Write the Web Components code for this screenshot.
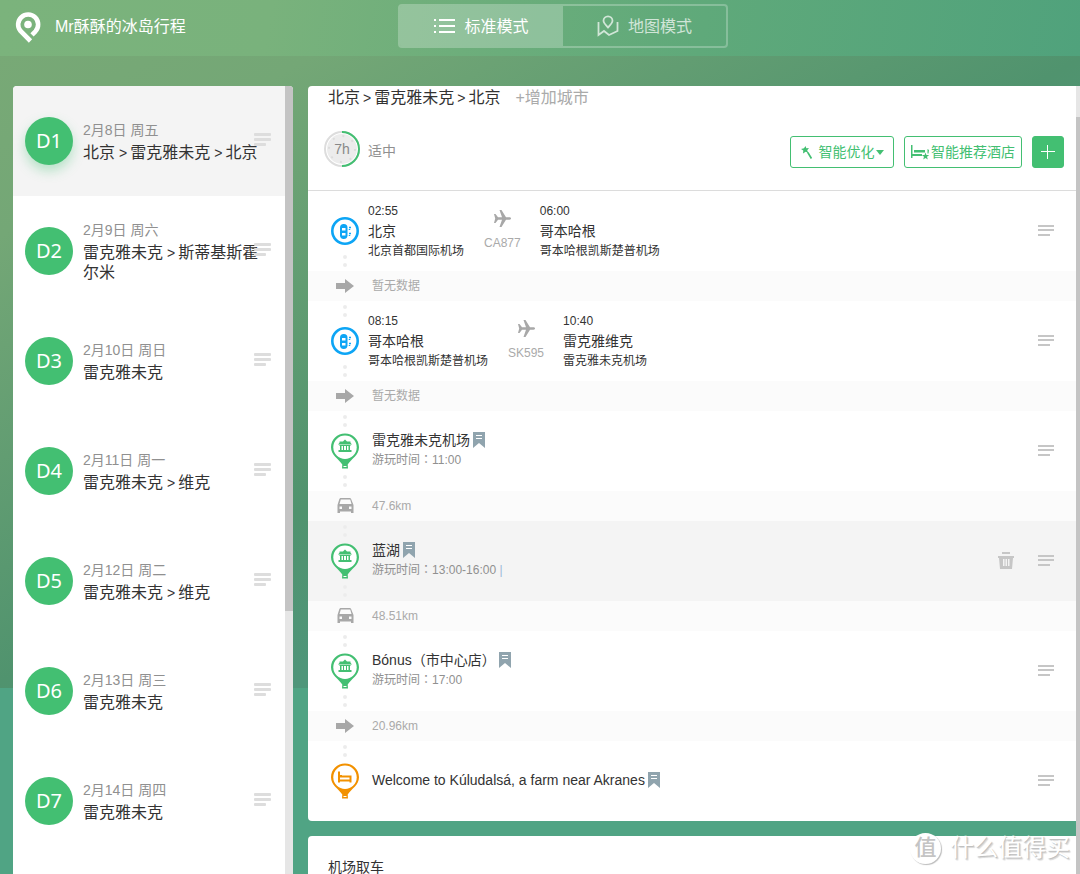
<!DOCTYPE html>
<html lang="zh-CN">
<head>
<meta charset="utf-8">
<meta name="viewport" content="width=device-width, initial-scale=1">
<title>Mr酥酥的冰岛行程</title>
<style>
html, body { height: 100%; }
body {
  margin: 0; overflow: hidden; color: #333;
  font: 14px/20px "Liberation Sans", "Noto Sans CJK SC", sans-serif;
  --green: #43bf72; --mute: #909090; --faint: #aaa;
}
</style>
</head>
<body>
<trip-app></trip-app>
<script>
const reset = `
  *, *::before, *::after { box-sizing: border-box; }
  svg { display: block; flex: none; }
  button { font: inherit; color: inherit; margin: 0; padding: 0; border: 0; background: none; cursor: pointer; }
  a { color: inherit; text-decoration: none; }
`;
function define(name, view) {
  customElements.define(name, class extends HTMLElement {
    connectedCallback() {
      if (this.shadowRoot) return;
      this.attachShadow({ mode: 'open' });
      const t = document.createElement('template');
      t.innerHTML = '<style>' + reset + '</style>' + view(this.dataset, this);
      this.shadowRoot.append(t.content.cloneNode(true));
    }
  });
}
const route = cities => cities.split('>').join('<i>&gt;</i>');

/* three-line drag handle */
define('drag-grip', () => `
<style>
  :host { display: block; flex: none; width: 16px; padding-bottom: 2px; color: #c6c6c6; }
  button { display: block; width: 100%; }
  :host([thick]) { width: 17px; color: #ddd; }
  .b { display: none; }
  :host([thick]) .a { display: none; }
  :host([thick]) .b { display: block; }
</style>
<button aria-label="拖动排序">
  <svg class="a" width="16" height="11" fill="currentColor"><path d="M0 0h16v2H0zM0 4h16v2H0zM0 9h12v2H0z"/></svg>
  <svg class="b" width="17" height="13" fill="currentColor"><rect width="17" height="3" rx="1"/><rect y="5" width="17" height="3" rx="1"/><rect y="10" width="12" height="3" rx="1"/></svg>
</button>`);

define('scroll-rail', () => `
<style>
  :host { display: flow-root; flex: none; width: 8px; background: #e6e6e6; }
  div { height: var(--size, 50%); margin-top: var(--from, 0px); background: #c4c4c4; }
</style><div></div>`);

define('top-bar', () => `
<style>
  :host { display: flex; height: 56px; background: linear-gradient(100deg, #7bb37c 0%, #79b27c 25%, #5fa97a 65%, #50a27c 100%); color: #fff; font-size: 16px; }
  .brand { flex: 0 1 398px; display: flex; align-items: center; gap: 14px; padding-left: 15px; padding-bottom: 2px; }
  nav { display: flex; flex: 0 0 330px; height: 44px; margin-top: 4px; border: 2px solid rgba(255,255,255,.25); border-radius: 4px; background-clip: padding-box; overflow: hidden; }
  nav button { flex: 1; display: flex; align-items: center; justify-content: center; gap: 9px; padding-top: 2px; opacity: .7; }
  nav .on { background: rgba(255,255,255,.25); opacity: 1; }
  nav svg { margin-bottom: 2px; }
</style>
<a class="brand" href="#">
  <svg width="26" height="32" viewBox="0 0 26 32" fill="none" stroke="#fff" stroke-width="4.600"><path d="M15.500 30L5.500 20A10 10 0 1 1 20.500 20.300L17 23.800"/><circle cx="13" cy="13.500" r="3.800" fill="#fff" stroke="none"/></svg>
  <span>Mr酥酥的冰岛行程</span>
</a>
<nav>
  <button class="on"><svg width="21" height="14" fill="#fff"><path d="M0 0h2v2H0zM5 0h16v2H5zM0 6h2v2H0zM5 6h16v2H5zM0 12h2v2H0zM5 12h16v2H5z"/></svg>标准模式</button>
  <button><svg width="22" height="22" viewBox="0 0 22 22" fill="none" stroke="#fff" stroke-width="1.800"><path d="M11 12.500C8 9.500 6.500 8 6.500 5.800a4.500 4.500 0 0 1 9 0C15.500 8 14 9.500 11 12.500z"/><path d="M1.500 7v13l5.500-4 5 4 8.500-4V7"/></svg>地图模式</button>
</nav>`);

define('day-item', (d, el) => `
<style>
  :host { display: flex; align-items: center; gap: 10px; position: relative; height: 110px; padding-left: 12px; }
  :host([active]) { background: #f4f4f4; }
  .no { flex: none; width: 48px; height: 48px; border-radius: 50%; background: var(--green); color: #fff; text-align: center; font: 20px/48px "Noto Sans", sans-serif; }
  :host([active]) .no { box-shadow: 0 6px 12px rgba(67,191,114,.35); }
  .text { width: 180px; }
  time { display: block; color: var(--mute); margin-bottom: 3px; }
  .route { font-size: 16px; }
  i { font-style: normal; font-size: 14px; margin: 0 3px 0 4px; }
  drag-grip { position: absolute; right: 14px; top: 47px; }
</style>
<button class="no">${d.no}</button>
<div class="text"><time>${d.date}</time><div class="route">${route(d.route)}</div></div>
<drag-grip thick></drag-grip>`);

define('day-list', () => `
<style>
  :host { display: flex; width: 280px; flex: none; background: #fff; border-radius: 4px 4px 0 0; overflow: hidden; }
  .list { flex: 1; overflow: hidden; }
  scroll-rail { --size: 66.600%; }
</style>
<div class="list"><slot></slot></div><scroll-rail></scroll-rail>`);

/* column of dots running through the stop's icon */
define('stop-rail', d => {
  const pin = (color, inner) => `<svg width="28" height="36" viewBox="0 0 28 36"><path d="M14 .500C6.200.500 0 6.500 0 14.300c0 8 7.500 11.500 11.300 17.200L11 35.500h6l-.3-4C20.500 25.800 28 22.300 28 14.300 28 6.500 21.800.500 14 .500z" fill="${color}"/><path d="M12.500 33.500h3" stroke="#fff"/><circle cx="14" cy="14.300" r="11.700" fill="#fff"/>${inner}</svg>`;
  const icons = {
    flight: `<svg width="28" height="28" viewBox="0 0 28 28"><circle cx="14" cy="14" r="12.700" fill="#fff" stroke="#0da5f5" stroke-width="2.600"/><rect x="9" y="7" width="7.500" height="15" rx="3.700" fill="#0da5f5"/><path d="M11 11h3.500v2.500H11zM11 16h3.500v2.500H11z" fill="#fff"/><path d="M18 10.500h2M18.500 12v1M18 16.500h2M18.500 18v1" stroke="#0da5f5" stroke-width="1.500"/></svg>`,
    sight: pin('#43bf72', '<path d="M14 6.500l2 2h3.500v1.300l1.500 1.700H7l1.500-1.700V8.500H12zM8.500 12h11v1h-11zM9 13h1.500v4H9zM12 13h1v4h-1zM15 13h1v4h-1zM17.500 13H19v4h-1.500zM7.500 17h13v2h-13z" fill="#43bf72"/>'),
    hotel: pin('#f29100', '<path d="M8 8.500v11M8.500 17.500h11M19.500 19.500v-6H10v-1.500" fill="none" stroke="#f29100" stroke-width="2"/>')
  };
  return `
<style>
  :host { display: flex; flex-direction: column; justify-content: space-between; align-items: center; flex: none; width: 28px; height: 80px; padding: 4px 0; }
  .dots { display: grid; gap: 4px; }
  .dots::before, .dots::after { content: ""; width: 4px; height: 4px; border-radius: 50%; background: #ececec; }
  :host([data-end="first"]) .top, :host([data-end="last"]) .bottom { visibility: hidden; }
</style>
<div class="dots top"></div>${icons[d.kind]}<div class="dots bottom"></div>`;
});

define('flight-row', d => `
<style>
  :host { display: flex; align-items: center; height: 80px; padding: 0 22px 0 23px; }
  .stop { font-size: 12px; color: #333; }
  .stop strong { display: block; font-size: 14px; font-weight: 400; }
  .stop time { display: block; }
  .from { margin-left: 9px; }
  .plane { display: flex; flex-direction: column; align-items: center; gap: 6px; margin: 0 19px 0 20px; font-size: 12px; color: var(--faint); }
  drag-grip { margin-left: auto; }
</style>
<stop-rail data-kind="flight" data-end="${d.end || ''}"></stop-rail>
<div class="stop from"><time>${d.t1}</time><strong>${d.c1}</strong>${d.a1}</div>
<div class="plane"><svg width="17" height="17" viewBox="0 0 17 17" fill="#a8a8a8"><path d="M0 4h1.500L4 7.300h4L5.500 0h2l4.500 7.300h3.500c2 0 2 2.400 0 2.400H12L7.500 17h-2L8 9.700H4L1.500 13H0l1.200-4.500z"/></svg>${d.no}</div>
<div class="stop"><time>${d.t2}</time><strong>${d.c2}</strong>${d.a2}</div>
<drag-grip></drag-grip>`);

define('spot-row', (d, el) => `
<style>
  :host { display: flex; align-items: center; height: 80px; padding: 0 22px 0 23px; }
  :host([active]) { background: #f4f4f4; }
  .text { margin-left: 13px; padding-bottom: 3px; }
  .name { display: flex; align-items: center; gap: 3px; }
  .time { font-size: 12px; color: var(--mute); }
  .wide { font-family: "Noto Sans CJK TC", sans-serif; line-height: 1; }
  .bar { color: #9db8d8; }
  .tools { display: flex; align-items: center; gap: 24px; margin-left: auto; }
  .tools button { padding-bottom: 2px; }
</style>
<stop-rail data-kind="${d.kind || 'sight'}" data-end="${d.end || ''}"></stop-rail>
<div class="text">
  <div class="name"><a href="#">${d.name.replace(/[（）]/g, '<span class="wide" lang="zh-Hant">$&</span>')}</a><svg width="12" height="16" viewBox="0 0 12 16"><path d="M0 0h12v16l-6-5-6 5z" fill="#90a4ae"/><path d="M3 3.500h6M3 6.500h6" stroke="#fff"/></svg></div>
  ${d.time ? `<div class="time">游玩时间<span class="wide" lang="zh-Hant">：</span>${d.time}${el.hasAttribute('active') ? ' <span class="bar">|</span>' : ''}</div>` : ''}
</div>
<div class="tools">
  ${el.hasAttribute('active') ? '<button aria-label="删除"><svg width="16" height="17" fill="#c6c6c6"><path fill-rule="evenodd" d="M4 0h8v2H4zM0 4h16v2h-1l-1 11H2L1 6H0zM5 7v7h1.500V7zM7.500 7v7H9V7zM10 7v7h1.500V7z"/></svg></button>' : ''}
  <drag-grip></drag-grip>
</div>`);

define('transit-row', d => `
<style>
  :host { display: flex; align-items: center; gap: 13px; height: 30px; padding-left: 23px; background: #fbfbfb; font-size: 12px; color: var(--faint); }
  .icon { display: flex; justify-content: center; width: 28px; }
</style>
<span class="icon">${d.by === 'car'
  ? '<svg width="18" height="16" viewBox="0 0 18 16"><path fill="#a8a8a8" fill-rule="evenodd" d="M5 0h8.500c1 0 1.500.5 1.800 1.500L17.500 7v8H15v-1.500H4V15H1.500V7l1.700-5.500C3.500.5 4 0 5 0zM4.800 1.500L3.500 6h12l-1.300-4.500zM3.500 8.500V11H6V8.500zM13 8.500V11h2.500V8.500z"/></svg>'
  : '<svg width="18" height="14" viewBox="0 0 18 14"><path fill="#a8a8a8" d="M0 4h9V0l9 7-9 7v-4H0z"/></svg>'}</span>
<span>${d.text}</span>`);

define('plan-head', () => `
<style>
  :host { display: block; border-bottom: 1px solid #dcdcdc; }
  .route { display: flex; gap: 15px; padding: 2px 20px 0; font-size: 16px; color: #333; }
  .route button { color: var(--faint); }
  i { font-style: normal; font-size: 14px; margin: 0 3px; }
  .bar { display: flex; align-items: center; height: 82px; padding: 0 12px 0 16px; }
  .ring { display: grid; place-items: center; position: relative; }
  .ring span { position: absolute; font-size: 14px; color: #888; }
  .pace { margin-left: 8px; padding-top: 4px; color: var(--mute); }
  .acts { display: flex; gap: 10px; margin-left: auto; padding-top: 6px; }
  .acts button { display: flex; align-items: center; justify-content: center; height: 32px; border: 1px solid var(--green); border-radius: 3px; color: var(--green); white-space: nowrap; }
  .opt { width: 104px; gap: 1px; }
  .opt svg:first-child { margin-right: 5px; }
  .hotel { width: 118px; gap: 1px; }
  .acts .add { width: 32px; background: var(--green); }
</style>
<div class="route"><span>${route('北京>雷克雅未克>北京')}</span><button>+增加城市</button></div>
<div class="bar">
  <div class="ring">
    <svg width="36" height="36" viewBox="0 0 36 36"><circle cx="18" cy="18" r="17" fill="none" stroke="#ddd" stroke-width="2"/><circle cx="18" cy="18" r="15" fill="#ececec"/><circle cx="18" cy="18" r="13" fill="none" stroke="#dcdcdc" stroke-width="2" stroke-dasharray="2 8.210"/><path d="M18 1a17 17 0 0 1 0 34" fill="none" stroke="#43bf72" stroke-width="2"/></svg>
    <span>7h</span>
  </div>
  <span class="pace">适中</span>
  <div class="acts">
    <button class="opt"><svg width="12" height="13" viewBox="0 0 12 13" fill="#43bf72"><path d="M4.500 0l.8 2.200L8 2 6.200 4.200l1 2.600-2.500-1L2 7.500l.3-3L0 3l3-.7zM6 6.800L7.500 6l3.700 6-1.500 1z"/></svg>智能优化<svg width="8" height="5" fill="#43bf72"><path d="M0 0h8L4 5z"/></svg></button>
    <button class="hotel"><svg width="19" height="15" viewBox="0 0 19 15" fill="#43bf72"><path d="M0 0h1.500v13H0zM3 5h11v2.500H3zM1.500 9H11v2H1.500zM16.500 4l1.500 1-.5 3.500h-1zM14.500 7.500l.9 2.500h2.800L16 11.700l.8 2.800-2.300-1.600-2.300 1.600.8-2.800-2.200-1.700h2.800z"/></svg>智能推荐酒店</button>
    <button class="add" aria-label="添加"><svg width="14" height="14" stroke="#fff"><path d="M0 6.500h14M6.500 0v14"/></svg></button>
  </div>
</div>`);

define('plan-card', () => `
<style>:host { display: block; background: #fff; border-radius: 4px 0 0 4px; overflow: hidden; } </style><slot></slot>`);

define('site-mark', () => `
<style>
  :host { position: absolute; right: 10px; bottom: 10px; display: flex; align-items: center; gap: 9px; color: #fff; font-size: 24px; line-height: 32px; text-shadow: 1px 1px 1px #bbb, 2px 2px 1px #ddd; pointer-events: none; }
  b { width: 31px; height: 31px; border-radius: 50%; background: #fff; box-shadow: 1px 1px 1px #bbb; color: #c4c4c4; text-align: center; text-shadow: none; line-height: 30px; font-size: 22px; font-weight: 500; }
</style><b>值</b><span>什么值得买</span>`);

define('trip-app', () => `
<style>
  :host { display: flex; flex-direction: column; position: relative; height: 100vh; overflow: hidden; background: linear-gradient(150deg, #78a976 4%, #74a776 18%, #50936e 52%, #4f967a 65%) 0 0 / 100% 688px no-repeat, #50a484; }
  .cols { flex: 1; min-height: 0; display: flex; gap: 15px; padding: 30px 0 0 13px; }
  main { flex: 1; display: flex; min-width: 0; }
  .cards { flex: 1; min-width: 0; display: flex; flex-direction: column; gap: 15px; overflow: hidden; }
  .cards > * { flex: none; }
  main scroll-rail { width: 4px; --from: 31px; --size: 100%; overflow: hidden; }
  h2 { margin: 0; padding: 21px 20px; font-size: 14px; font-weight: 400; }
</style>
<top-bar></top-bar>
<div class="cols">
  <day-list>
    <day-item active data-no="D1" data-date="2月8日 周五" data-route="北京>雷克雅未克>北京"></day-item>
    <day-item data-no="D2" data-date="2月9日 周六" data-route="雷克雅未克>斯蒂基斯霍尔米"></day-item>
    <day-item data-no="D3" data-date="2月10日 周日" data-route="雷克雅未克"></day-item>
    <day-item data-no="D4" data-date="2月11日 周一" data-route="雷克雅未克>维克"></day-item>
    <day-item data-no="D5" data-date="2月12日 周二" data-route="雷克雅未克>维克"></day-item>
    <day-item data-no="D6" data-date="2月13日 周三" data-route="雷克雅未克"></day-item>
    <day-item data-no="D7" data-date="2月14日 周四" data-route="雷克雅未克"></day-item>
  </day-list>
  <main>
    <div class="cards">
      <plan-card>
        <plan-head></plan-head>
        <flight-row data-end="first" data-no="CA877" data-t1="02:55" data-c1="北京" data-a1="北京首都国际机场" data-t2="06:00" data-c2="哥本哈根" data-a2="哥本哈根凯斯楚普机场"></flight-row>
        <transit-row data-text="暂无数据"></transit-row>
        <flight-row data-no="SK595" data-t1="08:15" data-c1="哥本哈根" data-a1="哥本哈根凯斯楚普机场" data-t2="10:40" data-c2="雷克雅维克" data-a2="雷克雅未克机场"></flight-row>
        <transit-row data-text="暂无数据"></transit-row>
        <spot-row data-name="雷克雅未克机场" data-time="11:00"></spot-row>
        <transit-row data-by="car" data-text="47.6km"></transit-row>
        <spot-row active data-name="蓝湖" data-time="13:00-16:00"></spot-row>
        <transit-row data-by="car" data-text="48.51km"></transit-row>
        <spot-row data-name="Bónus（市中心店）" data-time="17:00"></spot-row>
        <transit-row data-text="20.96km"></transit-row>
        <spot-row data-kind="hotel" data-end="last" data-name="Welcome to Kúludalsá, a farm near Akranes"></spot-row>
      </plan-card>
      <plan-card><h2>机场取车</h2></plan-card>
    </div>
    <scroll-rail></scroll-rail>
  </main>
</div>
<site-mark></site-mark>`);
</script>
</body>
</html>
